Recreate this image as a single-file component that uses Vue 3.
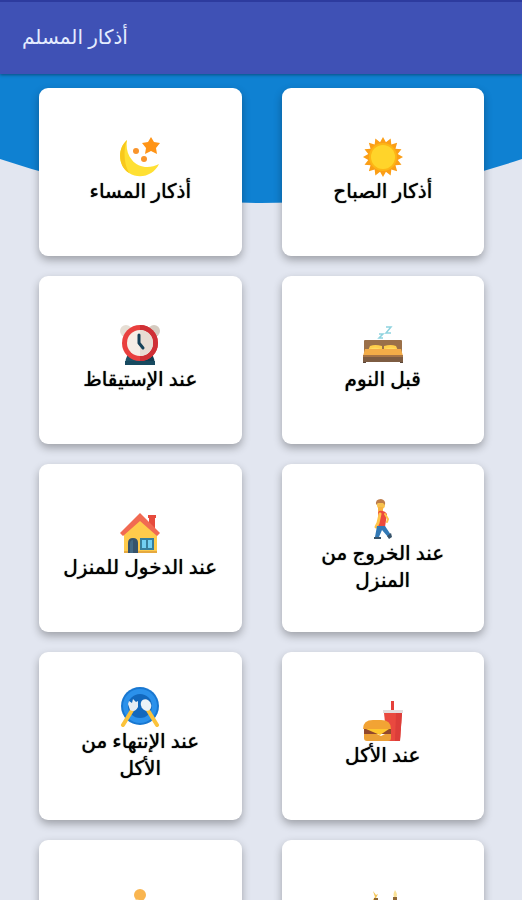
<template>
  <div class="app">
    <header class="toolbar">
      <h1 class="title" lang="ar">أذكار المسلم</h1>
    </header>
    <main class="content">
      <svg class="wave" viewBox="0 0 522 129" preserveAspectRatio="none" aria-hidden="true">
        <path d="M0 0H522V85Q261 173 0 85Z" fill="#0f81d2" />
      </svg>
      <div class="grid" dir="rtl" lang="ar">
        <button v-for="item in items" :key="item.icon" type="button" class="card">
          <svg class="icon" viewBox="0 0 40 40" aria-hidden="true">
            <g v-if="item.icon === 'sun'">
              <polygon :points="sunRays" fill="#fb9e16" />
              <circle cx="20" cy="20" r="14" fill="#fdb515" />
              <circle cx="20" cy="20" r="12" fill="#ffd42a" />
            </g>
            <g v-else-if="item.icon === 'moon'">
              <path d="M7 3C-3 12-2 29 9 36C20 43 34 38 39 27C30 32 18 31 12 23C7 17 6 10 7 3Z" fill="#ffe033" />
              <path d="M7 3C-3 12-2 29 9 36C4 27 3 13 7 3Z" fill="#f8c81c" />
              <path d="M31 0L34 5L40 6L36 11L37 17L31 14L25 17L26 11L22 6L28 5Z" fill="#ff9416" />
              <circle cx="16" cy="14" r="3" fill="#f9942b" />
              <circle cx="24" cy="22" r="3" fill="#f9942b" />
            </g>
            <g v-else-if="item.icon === 'bed'">
              <path d="M16 9H20L16 13H20M23 2H28L23 8H28" fill="none" stroke="#8fd3df" stroke-width="1.5" />
              <path d="M1 16Q1 15 2 15H38Q39 15 39 16V28H1Z" fill="#9b7049" />
              <path d="M4 28L7 21Q12 19 19 21V28ZM21 28V21Q28 19 33 21L36 28Z" fill="#ffcf4b" />
              <path d="M2 24H38L40 31H0Z" fill="#f4ad48" />
              <path d="M6 24Q12 21 18 24ZM22 24Q28 21 34 24Z" fill="#ffdc62" />
              <rect y="30" width="40" height="7" fill="#7d5c42" />
              <path d="M0 30H40V32H0Z" fill="#a87546" />
              <path d="M0 37H3V38H0ZM37 37H40V38H37Z" fill="#5b4639" />
            </g>
            <g v-else-if="item.icon === 'clock'">
              <circle cx="6" cy="6" r="6" fill="#e6ded4" />
              <circle cx="34" cy="6" r="6" fill="#d5cbc0" />
              <path d="M8 29H20V36L5 40Q5 34 8 29Z" fill="#1d5268" />
              <path d="M32 29H20V36L35 40Q35 34 32 29Z" fill="#123d52" />
              <path d="M5 36H35V40H5Z" fill="#174a60" />
              <circle cx="20" cy="18" r="18" fill="#e9403e" />
              <path d="M20 0A18 18 0 0 1 20 36Z" fill="#cf3036" />
              <circle cx="20" cy="18" r="13" fill="#f7eee6" />
              <path d="M20 5A13 13 0 0 1 20 31Z" fill="#e7dcd3" />
              <path d="M19 10V18L23 23" fill="none" stroke="#154158" stroke-width="3" stroke-linecap="round" stroke-linejoin="round" />
            </g>
            <g v-else-if="item.icon === 'walk'">
              <circle cx="18" cy="6" r="4" fill="#f8c24d" />
              <path d="M13 6Q12 0 18 0Q23 1 22 6L20 4H15Z" fill="#bd7c48" />
              <path d="M15 8H20V14H15Z" fill="#f9b442" />
              <path d="M16 12Q21 11 24 15L22 28H14Q16 20 15 14Z" fill="#ec4a3d" />
              <path d="M17 15L15 24L13 28" fill="none" stroke="#ffc54a" stroke-width="3" stroke-linecap="round" />
              <path d="M22 15L25 20L24 23" fill="none" stroke="#ffc54a" stroke-width="2" stroke-linecap="round" />
              <path d="M14 27H22L28 36L25 38L19 31L16 38H12Z" fill="#3279b6" />
              <path d="M11 38H18V40H11ZM24 37L28 34L29 38L26 40Z" fill="#37536a" />
            </g>
            <g v-else-if="item.icon === 'home'">
              <path d="M28 2H36V5H35V18H29V5H28Z" fill="#e64b3d" />
              <path d="M4 20L20 4L37 20V40H4Z" fill="#ffcb4b" />
              <path d="M0 20L20 0L40 20L37 23L20 8L3 23Z" fill="#f16a52" />
              <path d="M8 40V30Q8 25 13 25Q18 25 18 30V40Z" fill="#36536b" />
              <path d="M10 40V31Q10 27 13 27V40Z" fill="#426985" />
              <rect x="20" y="25" width="14" height="12" fill="#367f9d" />
              <path d="M22 27H26V35H22ZM28 27H32V35H28Z" fill="#72d0f2" />
              <path d="M4 38H8V40H4ZM18 38H37V40H18Z" fill="#e6a93f" />
            </g>
            <g v-else-if="item.icon === 'burger'">
              <path d="M28 0H31V11H28Z" fill="#e5413b" />
              <path d="M21 12H39L37 40H24Z" fill="#e9493f" />
              <path d="M33 12H39L37 40H32Z" fill="#dc3d39" />
              <path d="M20 9H40V12H20Z" fill="#e3dddd" />
              <path d="M0 28Q0 19 10 19H18Q28 19 28 28Z" fill="#f2a334" />
              <path d="M1 28H28V33H1Z" fill="#91482c" />
              <path d="M3 28H26L17 34Z" fill="#ffc72e" />
              <path d="M1 33H14L18 35L22 33H28V37Q28 40 25 40H4Q1 40 1 37Z" fill="#eba036" />
            </g>
            <g v-else-if="item.icon === 'plate'">
              <circle cx="20" cy="19" r="19" fill="#1877d1" />
              <circle cx="20" cy="19" r="17" fill="#2b91eb" />
              <circle cx="20" cy="19" r="12" fill="#1268bd" />
              <path d="M14 20L3 38" stroke="#fbc33b" stroke-width="4" stroke-linecap="round" />
              <path d="M26 20L37 38" stroke="#fbc33b" stroke-width="4" stroke-linecap="round" />
              <path d="M8 17L9 14L12 16L13 12L16 15L18 14L18 20Q15 26 10 23Z" fill="#e7edf3" />
              <ellipse cx="26" cy="18" rx="5" ry="6" transform="rotate(-30 26 18)" fill="#edf3f8" />
            </g>
            <g v-else-if="item.icon === 'candles'">
              <path d="M10 2L13 6L15 5L13 9L16 12H9L12 8Z" fill="#f4c451" />
              <path d="M32 1Q36 7 32 9Q29 7 32 1Z" fill="#fbe397" />
              <path d="M11 9H15V40H11ZM30 8H34V40H30Z" fill="#906936" />
            </g>
            <g v-else>
              <circle cx="20" cy="6" r="6" fill="#f9b550" />
              <path d="M12 12L17 10L22 12V40H12Z" fill="#fbd28b" />
            </g>
          </svg>
          <span class="label">{{ item.label }}</span>
        </button>
      </div>
    </main>
  </div>
</template>

<script setup>
import { ref } from 'vue'

const items = ref([
  { icon: 'sun', label: 'أذكار الصباح' },
  { icon: 'moon', label: 'أذكار المساء' },
  { icon: 'bed', label: 'قبل النوم' },
  { icon: 'clock', label: 'عند الإستيقاظ' },
  { icon: 'walk', label: 'عند الخروج من المنزل' },
  { icon: 'home', label: 'عند الدخول للمنزل' },
  { icon: 'burger', label: 'عند الأكل' },
  { icon: 'plate', label: 'عند الإنتهاء من الأكل' },
  { icon: 'candles', label: '' },
  { icon: 'person', label: '' },
])

// 16 rays, outer and inner points alternate
const sunRays = Array.from({ length: 32 }, (_, i) => {
  const r = i % 2 ? 15 : 20
  const a = (i * Math.PI) / 16
  return `${20 + r * Math.sin(a)},${20 - r * Math.cos(a)}`
}).join(' ')
</script>

<style>
body {
  margin: 0;
  background: #e2e6f0;
}
</style>

<style scoped>
.app {
  display: flex;
  flex-direction: column;
  height: 100vh;
  overflow: hidden;
  background: #e2e6f0;
  font-family: 'Noto Sans', 'DejaVu Sans', sans-serif;
}

.toolbar {
  position: relative;
  z-index: 1;
  display: flex;
  flex-shrink: 0;
  align-items: center;
  box-sizing: border-box;
  height: 74px;
  padding: 0 22px 2px;
  border-top: 2px solid #2d3b9e;
  background: #3f51b5;
  box-shadow: 0 1px 3px rgba(0, 0, 0, 0.4);
}

.title {
  margin: 0;
  color: #e4ecff;
  font-size: 20px;
  font-weight: 400;
  line-height: 28px;
}

.content {
  position: relative;
  flex: 1;
  min-height: 0;
}

.wave {
  position: absolute;
  top: 0;
  left: 0;
  width: 100%;
  height: 129px;
}

.grid {
  position: relative;
  display: grid;
  grid-template-columns: 1fr 1fr;
  grid-auto-rows: 168px;
  gap: 20px 40px;
  padding: 14px 38px 20px 39px;
}

.card {
  display: flex;
  flex-direction: column;
  align-items: center;
  justify-content: center;
  padding: 0 22px 4px;
  border: 0;
  border-radius: 9px;
  background: #fff;
  box-shadow: 0 4px 8px rgba(0, 0, 0, 0.3);
  color: #000;
  font-family: inherit;
  cursor: pointer;
}

.icon {
  flex-shrink: 0;
  width: 40px;
  height: 40px;
}

.label {
  min-height: 27px;
  font-size: 20px;
  font-weight: 400;
  line-height: 27px;
  text-align: center;
  text-shadow: 0 0 1px #000;
}
</style>
